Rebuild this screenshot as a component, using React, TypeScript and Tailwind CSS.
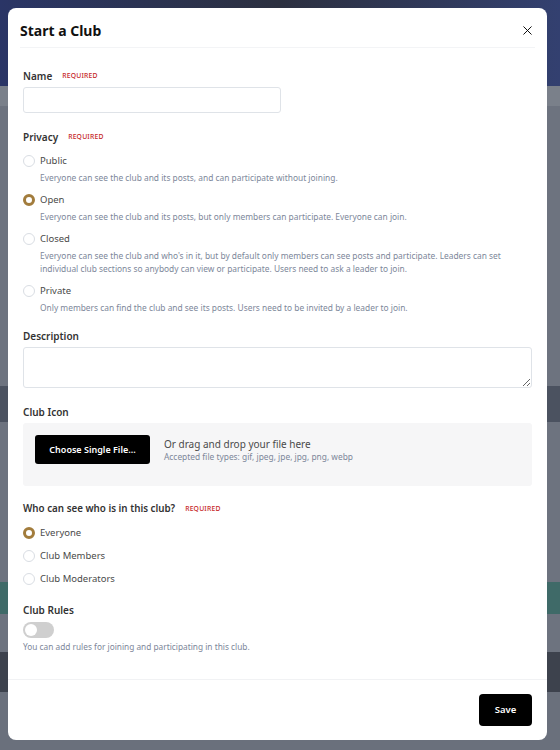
import React from 'react';
import { X } from 'lucide-react';

const Required = () => (
  <span className="ml-[10px] text-[6.8px] font-medium tracking-[0.2px] text-[#c62828]">REQUIRED</span>
);

const Radio = ({ checked }: { checked?: boolean }) =>
  checked ? (
    <span className="h-[12px] w-[12px] shrink-0 rounded-full border-[3.5px] border-[#a27c3c] bg-white" />
  ) : (
    <span className="h-[12px] w-[12px] shrink-0 rounded-full border border-[#d9dde3] bg-white" />
  );

const privacyOptions = [
  {
    label: 'Public',
    desc: 'Everyone can see the club and its posts, and can participate without joining.',
  },
  {
    label: 'Open',
    desc: 'Everyone can see the club and its posts, but only members can participate. Everyone can join.',
    checked: true,
  },
  {
    label: 'Closed',
    desc: "Everyone can see the club and who's in it, but by default only members can see posts and participate. Leaders can set individual club sections so anybody can view or participate. Users need to ask a leader to join.",
  },
  {
    label: 'Private',
    desc: 'Only members can find the club and see its posts. Users need to be invited by a leader to join.',
  },
];

const visibility = ['Everyone', 'Club Members', 'Club Moderators'];

export default function App() {
  return (
    <div className="relative h-[750px] w-[560px] overflow-hidden bg-[#6a707c] font-['Noto_Sans',sans-serif]">
      {/* Page behind the modal */}
      <div className="flex flex-col">
        <div className="h-[86px] bg-gradient-to-r from-[#2a3566] via-[#2c3040] to-[#334070]" />
        <div className="h-[20px] bg-[#7a808a]" />
        <div className="h-[280px] bg-[#6d737f]" />
        <div className="h-[36px] bg-[#4b5260]" />
        <div className="h-[160px] bg-[#6d737f]" />
        <div className="h-[32px] bg-[#3f6a68]" />
        <div className="h-[38px] bg-[#6d737f]" />
        <div className="h-[40px] bg-[#3d424d]" />
        <div className="h-[60px] bg-[#6a707c]" />
      </div>

      {/* Modal */}
      <div className="absolute inset-0 flex pl-2 pt-2">
        <div className="flex h-[732px] w-[539px] flex-col rounded-lg bg-white">
          <div className="mx-3 flex h-10 items-center justify-between border-b border-[#f3f4f6] pt-[6px]">
            <h2 className="text-[14px] font-bold text-[#111]">Start a Club</h2>
            <X className="h-[15px] w-[15px] text-black" strokeWidth={1.5} />
          </div>

          <div className="flex flex-1 flex-col px-[15px] text-[#333]">
            <div className="mt-[21px] flex h-[14px] items-center text-[10px] font-semibold">
              Name <Required />
            </div>
            <input className="mt-[4px] h-[26px] w-[258px] rounded-[3px] border border-[#dfe3e8] outline-none" />

            <div className="mt-[17px] flex h-[14px] items-center text-[10px] font-semibold">
              Privacy <Required />
            </div>
            <div className="mt-[10px] flex flex-col gap-[9px]">
              {privacyOptions.map(o => (
                <div key={o.label}>
                  <div className="flex h-[14px] items-center gap-[5px] text-[9.5px] text-[#4a4a4a]">
                    <Radio checked={o.checked} />
                    {o.label}
                  </div>
                  <p className="mt-[3px] pl-[17px] text-[8.4px] leading-[13px] text-[#7d879a]">{o.desc}</p>
                </div>
              ))}
            </div>

            <div className="mt-[15px] flex h-[14px] items-center text-[10px] font-semibold">Description</div>
            <textarea className="mt-[4px] h-[41px] resize-y rounded-[3px] border border-[#dfe3e8] outline-none" />

            <div className="mt-[17px] flex h-[14px] items-center text-[10px] font-semibold">Club Icon</div>
            <div className="mt-[4px] flex h-[63px] items-start gap-[14px] rounded-[3px] bg-[#f6f6f7] pl-[12px] pt-[12px]">
              <button className="h-[29px] w-[115px] rounded-[3px] bg-black text-[9px] font-semibold text-white">
                Choose Single File...
              </button>
              <div className="pt-[3px]">
                <div className="text-[10px] leading-[13px] text-[#4a4a4a]">Or drag and drop your file here</div>
                <div className="text-[8.4px] leading-[11px] text-[#7d879a]">
                  Accepted file types: gif, jpeg, jpe, jpg, png, webp
                </div>
              </div>
            </div>

            <div className="mt-[16px] flex h-[14px] items-center text-[9.8px] font-semibold">
              Who can see who is in this club? <Required />
            </div>
            <div className="mt-[10px] flex flex-col gap-[9px]">
              {visibility.map((v, i) => (
                <div key={v} className="flex h-[14px] items-center gap-[5px] text-[9.5px] text-[#4a4a4a]">
                  <Radio checked={i === 0} />
                  {v}
                </div>
              ))}
            </div>

            <div className="mt-[17px] flex h-[14px] items-center text-[10px] font-semibold">Club Rules</div>
            <div className="mt-[5px] flex h-[16px] w-[31px] items-center rounded-full bg-[#cfcfcf] pl-[2px]">
              <span className="h-[12px] w-[12px] rounded-full bg-white" />
            </div>
            <p className="mt-[3px] text-[8.3px] leading-[12px] text-[#7d879a]">
              You can add rules for joining and participating in this club.
            </p>
          </div>

          <div className="flex h-[61px] items-center justify-end border-t border-[#f1f2f4] pr-[15px]">
            <button className="h-[32px] w-[53px] rounded-[4px] bg-black text-[9.5px] font-semibold text-white">
              Save
            </button>
          </div>
        </div>
      </div>
    </div>
  );
}
